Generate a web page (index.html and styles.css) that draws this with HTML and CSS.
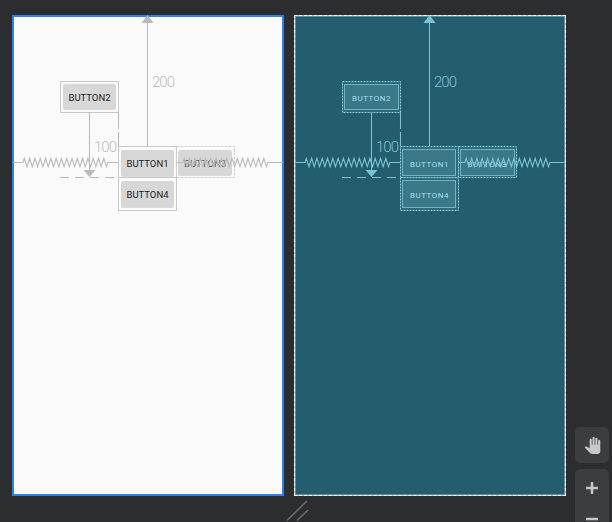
FILE: index.html
```html
<!DOCTYPE html>
<html lang="en">
<head>
<meta charset="utf-8">
<title>Layout editor</title>
<link rel="stylesheet" href="styles.css">
</head>
<body>
<div class="workspace">
  <div class="panel design">
    <svg class="canvas" width="272" height="481" viewBox="0 0 272 481">
      <line class="ln" x1="135.5" y1="6" x2="135.5" y2="131"/>
      <polygon class="head" points="135.5,0 129.5,8 141.5,8"/>
      <text class="dim" x="140" y="72">200</text>

      <rect class="box" x="48.5" y="66.5" width="58" height="31"/>
      <rect class="btn" x="51" y="69" width="53" height="25" rx="2"/>
      <text class="lbl" x="77.5" y="82">BUTTON2</text>

      <line class="ln" x1="77.5" y1="97" x2="77.5" y2="156"/>
      <polygon class="head" points="71.5,155 83.5,155 77.5,162"/>
      <line class="ln dash-v" x1="106.5" y1="97" x2="106.5" y2="131"/>
      <line class="ln dash-h" x1="48" y1="162.5" x2="164" y2="162.5"/>
      <text class="dim" x="82" y="137">100</text>

      <rect class="box" x="106.5" y="131.5" width="58" height="31"/>
      <rect class="btn" x="109" y="135" width="53" height="26" rx="2"/>
      <text class="lbl" x="135.5" y="148">BUTTON1</text>

      <rect class="box ghost" x="164.5" y="131.5" width="58" height="31"/>
      <rect class="btn" x="166" y="135" width="54" height="25" rx="2"/>
      <text class="lbl faded" x="193" y="148">BUTTON3</text>

      <rect class="box" x="106.5" y="162.5" width="58" height="33"/>
      <rect class="btn" x="109" y="166" width="53" height="26" rx="2"/>
      <text class="lbl" x="135.5" y="179">BUTTON4</text>

      <path class="ln zig" d="M1 147.5 H11 l1.325 -4.2 2.65 8.4 2.65 -8.4 2.65 8.4 2.65 -8.4 2.65 8.4 2.65 -8.4 2.65 8.4 2.65 -8.4 2.65 8.4 2.65 -8.4 2.65 8.4 2.65 -8.4 2.65 8.4 2.65 -8.4 2.65 8.4 2.65 -8.4 2.65 8.4 2.65 -8.4 2.65 8.4 2.65 -8.4 2.65 8.4 2.65 -8.4 2.65 8.4 2.65 -8.4 2.65 8.4 2.65 -8.4 2.65 8.4 2.65 -8.4 2.65 8.4 2.65 -8.4 2.65 8.4 1.325 -4.2 H106"/>
      <path class="ln zig" d="M164.5 147.5 H171 l1.325 -4.2 2.65 8.4 2.65 -8.4 2.65 8.4 2.65 -8.4 2.65 8.4 2.65 -8.4 2.65 8.4 2.65 -8.4 2.65 8.4 2.65 -8.4 2.65 8.4 2.65 -8.4 2.65 8.4 2.65 -8.4 2.65 8.4 2.65 -8.4 2.65 8.4 2.65 -8.4 2.65 8.4 2.65 -8.4 2.65 8.4 2.65 -8.4 2.65 8.4 2.65 -8.4 2.65 8.4 2.65 -8.4 2.65 8.4 2.65 -8.4 2.65 8.4 2.65 -8.4 2.65 8.4 1.325 -4.2 H271"/>
    </svg>
  </div>

  <div class="panel blueprint">
    <svg class="canvas" width="272" height="481" viewBox="0 0 272 481">
      <line class="ln" x1="135.5" y1="6" x2="135.5" y2="131"/>
      <polygon class="head" points="135.5,0 129.5,8 141.5,8"/>
      <text class="dim" x="140" y="72">200</text>

      <rect class="box" x="48.5" y="66.5" width="58" height="31"/>
      <rect class="btn" x="50.5" y="69.5" width="54" height="25"/>
      <text class="lbl" x="77.5" y="83">BUTTON2</text>

      <line class="ln" x1="77.5" y1="97" x2="77.5" y2="156"/>
      <polygon class="head" points="71.5,155 83.5,155 77.5,162"/>
      <line class="ln dash-v" x1="106.5" y1="97" x2="106.5" y2="131"/>
      <line class="ln dash-h" x1="48" y1="162.5" x2="164" y2="162.5"/>
      <text class="dim" x="82" y="137">100</text>

      <rect class="box" x="106.5" y="131.5" width="58" height="31"/>
      <rect class="btn" x="108.5" y="134.5" width="53" height="26"/>
      <text class="lbl" x="135.5" y="149">BUTTON1</text>

      <rect class="box" x="164.5" y="131.5" width="58" height="31"/>
      <rect class="btn" x="166.5" y="134.5" width="54" height="26"/>
      <text class="lbl" x="193" y="149">BUTTON3</text>

      <rect class="box" x="106.5" y="162.5" width="58" height="33"/>
      <rect class="btn" x="108.5" y="165.5" width="53" height="27"/>
      <text class="lbl" x="135.5" y="180">BUTTON4</text>

      <path class="ln zig" d="M1 147.5 H11 l1.325 -4.2 2.65 8.4 2.65 -8.4 2.65 8.4 2.65 -8.4 2.65 8.4 2.65 -8.4 2.65 8.4 2.65 -8.4 2.65 8.4 2.65 -8.4 2.65 8.4 2.65 -8.4 2.65 8.4 2.65 -8.4 2.65 8.4 2.65 -8.4 2.65 8.4 2.65 -8.4 2.65 8.4 2.65 -8.4 2.65 8.4 2.65 -8.4 2.65 8.4 2.65 -8.4 2.65 8.4 2.65 -8.4 2.65 8.4 2.65 -8.4 2.65 8.4 2.65 -8.4 2.65 8.4 1.325 -4.2 H106"/>
      <path class="ln zig" d="M164.5 147.5 H171 l1.325 -4.2 2.65 8.4 2.65 -8.4 2.65 8.4 2.65 -8.4 2.65 8.4 2.65 -8.4 2.65 8.4 2.65 -8.4 2.65 8.4 2.65 -8.4 2.65 8.4 2.65 -8.4 2.65 8.4 2.65 -8.4 2.65 8.4 2.65 -8.4 2.65 8.4 2.65 -8.4 2.65 8.4 2.65 -8.4 2.65 8.4 2.65 -8.4 2.65 8.4 2.65 -8.4 2.65 8.4 2.65 -8.4 2.65 8.4 2.65 -8.4 2.65 8.4 2.65 -8.4 2.65 8.4 1.325 -4.2 H271"/>
    </svg>
  </div>
</div>

<svg class="grip" width="28" height="24" viewBox="0 0 28 24">
  <line x1="3" y1="22.5" x2="23" y2="3"/>
  <line x1="13" y1="22.5" x2="24" y2="12"/>
</svg>

<div class="tools">
  <div class="tool hand">
    <svg width="17" height="17" viewBox="0 0 24 24"><path d="M23 5.5V20c0 2.2-1.8 4-4 4h-7.3c-1.08 0-2.1-.43-2.850-1.19L1 14.83s1.26-1.23 1.3-1.25c.22-.19.49-.29.79-.29.22 0 .42.06.6.16.04.01 4.31 2.46 4.31 2.46V4c0-.83.67-1.5 1.5-1.5S11 3.17 11 4v7h1V1.5c0-.83.67-1.5 1.5-1.5S15 .67 15 1.5V11h1V2.5c0-.83.67-1.5 1.5-1.5s1.5.67 1.5 1.5V11h1V5.5c0-.83.67-1.5 1.5-1.5s1.5.67 1.5 1.5z"/></svg>
  </div>
  <div class="tool zoom">
    <svg width="34" height="70" viewBox="0 0 34 70">
      <line x1="11" y1="19" x2="23" y2="19"/>
      <line x1="17" y1="13" x2="17" y2="25"/>
      <line x1="11" y1="50" x2="23" y2="50"/>
    </svg>
  </div>
</div>
</body>
</html>
```
FILE: styles.css
```css
html, body {
  margin: 0;
  padding: 0;
  width: 612px;
  height: 522px;
  overflow: hidden;
  background: #2c2d2f;
  font-family: Roboto, "Liberation Sans", sans-serif;
}

body {
  position: relative;
  box-sizing: border-box;
  padding: 15px 0 0 12px;
}

.workspace {
  display: flex;
  gap: 10px;
  align-items: flex-start;
}

.panel {
  width: 272px;
  height: 481px;
  box-sizing: border-box;
  flex: none;
}

.canvas {
  display: block;
  overflow: visible;
}

/* Design (light) surface */
.design {
  background: #fafafa;
  box-shadow: inset 0 0 0 2px #2f80ed;
}

.design .ln {
  stroke: #bababa;
  stroke-width: 1.1;
  fill: none;
}

.design .head {
  fill: #bababa;
}

.design .dim {
  fill: #bdbdbd;
}

.design .box {
  fill: none;
  stroke: #c9c9c9;
  stroke-width: 1;
}

.design .box.ghost {
  stroke: #d0d0d0;
  stroke-dasharray: 3 1;
}

.design .btn {
  fill: #d7d7d7;
  filter: drop-shadow(0 1px 0.5px rgba(0, 0, 0, 0.12));
}

.design .lbl {
  fill: #1c1c1c;
  font-size: 9.5px;
  font-weight: 400;
}

.design .lbl.faded {
  fill: #555555;
}

/* Blueprint surface */
.blueprint {
  border: 1px dashed #ffffff;
  background: linear-gradient(#245d6d, #245d6d) padding-box, #a9c3ca border-box;
  box-shadow: inset 0 0 0 1px rgba(200, 235, 245, 0.35);
}

.blueprint .canvas {
  margin: -1px;
}

.blueprint .ln {
  stroke: #79c2d3;
  stroke-width: 1.1;
  fill: none;
}

.blueprint .head {
  fill: #79c2d3;
}

.blueprint .dim {
  fill: #79c2d3;
}

.blueprint .box {
  fill: #2f6a7a;
  stroke: #86cfe0;
  stroke-width: 1;
  stroke-dasharray: 2 1;
}

.blueprint .btn {
  fill: #3b7888;
  stroke: #6cb5c7;
  stroke-width: 1;
}

.blueprint .lbl {
  fill: #a6deec;
  font-size: 8px;
  font-weight: 400;
  letter-spacing: 0.5px;
}

.dim {
  font-size: 15px;
  font-weight: 300;
  letter-spacing: -1px;
}

.lbl {
  text-anchor: middle;
  dominant-baseline: central;
}

.dash-v {
  stroke-dasharray: 17 3;
}

.dash-h {
  stroke-dasharray: 9 6;
}

/* Resize grip */
.grip {
  position: absolute;
  left: 284px;
  top: 498px;
}

.grip line {
  stroke: #6e6e6e;
  stroke-width: 1.5;
}

/* Floating zoom / pan tools */
.tools {
  position: absolute;
  left: 575px;
  top: 427px;
  width: 34px;
  display: flex;
  flex-direction: column;
  gap: 6px;
}

.tool {
  background: #3b3e41;
  border-radius: 5px;
}

.hand {
  height: 36px;
  display: flex;
  align-items: center;
  justify-content: center;
}

.hand svg {
  fill: #c8c8c8;
}

.zoom {
  height: 70px;
}

.zoom svg {
  display: block;
}

.zoom line {
  stroke: #c5c5c5;
  stroke-width: 2.5;
}
```
